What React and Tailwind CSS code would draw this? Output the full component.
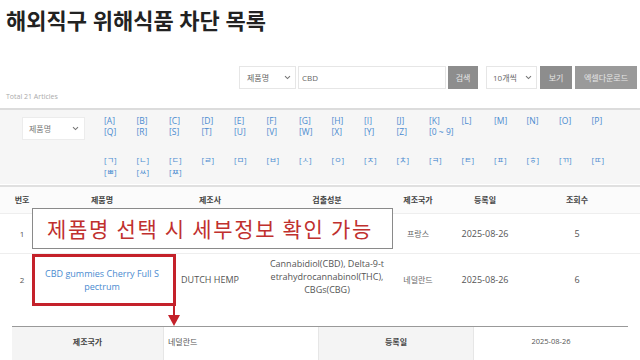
import React from "react";

const row1 = ["A","B","C","D","E","F","G","H","I","J","K","L","M","N","O","P"];
const row2 = ["Q","R","S","T","U","V","W","X","Y","Z","0 ~ 9"];
const han1 = ["ㄱ","ㄴ","ㄷ","ㄹ","ㅁ","ㅂ","ㅅ","ㅇ","ㅈ","ㅊ","ㅋ","ㅌ","ㅍ","ㅎ","ㄲ","ㄸ"];
const han2 = ["ㅃ","ㅆ","ㅉ"];

function Chevron() {
  return (
    <svg width="7" height="5" viewBox="0 0 7 5" className="shrink-0">
      <path d="M1 1.2 L3.5 3.6 L6 1.2" fill="none" stroke="#777" strokeWidth="1.1" />
    </svg>
  );
}

function LetterRow({ items, hangul }) {
  return (
    <div className="grid grid-cols-[repeat(16,32.5px)]">
      {items.map((l) => (
        <span key={l} className={hangul ? "text-[8px] leading-[12px] text-[#4a8bd0] whitespace-nowrap" : "text-[8.5px] leading-[11px] text-[#4a8bd0] whitespace-nowrap"}>
          [{l}]
        </span>
      ))}
    </div>
  );
}

const cols = "grid grid-cols-[44px_116px_100px_134px_48px_86px_98px]";

export default function App() {
  return (
    <div className="relative w-[640px] h-[360px] overflow-hidden bg-white font-['Open_Sans','Noto_Sans_CJK_KR',sans-serif] text-[#333]">
      <h1 className="h-[40px] pl-[6px] text-[22px] leading-[40px] font-bold text-[#222]">
        해외직구 위해식품 차단 목록
      </h1>

      <div className="mt-[26px] flex h-[23px] items-stretch pr-[3px] justify-end text-[8px]">
        <div className="flex w-[57px] items-center justify-between border border-[#e6e6e6] bg-white pl-[7px] pr-[4px] text-[#666]">
          <span>제품명</span>
          <Chevron />
        </div>
        <div className="ml-[2px] flex w-[148px] items-center border border-[#e6e6e6] bg-white pl-[3px] text-[#666]">
          CBD
        </div>
        <div className="ml-[2px] flex w-[30px] items-center justify-center bg-[#8d8d8d] text-[#e6e6e6]">검색</div>
        <div className="ml-[8px] flex w-[51px] items-center justify-between border border-[#e6e6e6] bg-white pl-[6px] pr-[4px] text-[#666]">
          <span>10개씩</span>
          <Chevron />
        </div>
        <div className="ml-[3px] flex w-[32px] items-center justify-center bg-[#8d8d8d] text-[#e6e6e6]">보기</div>
        <div className="ml-[3px] flex w-[62px] items-center justify-center bg-[#9a9a9a] text-[#e6e6e6]">엑셀다운로드</div>
      </div>

      <div className="h-[16px] pl-[6px] pt-[3px] text-[7px] leading-[10px] text-[#aaa]">Total 21 Articles</div>

      <div className="mt-[3px] border-t-2 border-[#dcdcdc] bg-[#f6f6f6] pt-[5px] pb-[6px] flex">
        <div className="ml-[22px] mt-[2px] flex h-[23px] w-[63px] items-center justify-between border border-[#ececec] bg-white pl-[6px] pr-[5px] text-[8px] text-[#777]">
          <span>제품명</span>
          <Chevron />
        </div>
        <div className="ml-[19px] flex flex-col">
          <div>
            <LetterRow items={row1} />
            <LetterRow items={row2} />
          </div>
          <div className="mt-[17px]">
            <LetterRow items={han1} hangul />
            <LetterRow items={han2} hangul />
          </div>
        </div>
      </div>

      <div className="mt-[1px] border-t-2 border-[#e0e0e0]">
        <div className={cols + " h-[27px] items-center bg-[#fbfbfb] border-b border-[#eeeeee] text-[8px] font-bold text-[#444] text-center"}>
          <span>번호</span>
          <span>제품명</span>
          <span>제조사</span>
          <span>검출성분</span>
          <span>제조국가</span>
          <span>등록일</span>
          <span>조회수</span>
        </div>
        <div className={cols + " h-[40px] items-center border-b border-[#eeeeee] text-[9px] text-[#555] text-center"}>
          <span className="text-[8px]">1</span>
          <span></span>
          <span></span>
          <span></span>
          <span className="text-[8px] text-[#666] whitespace-nowrap">프랑스</span>
          <span>2025-08-26</span>
          <span>5</span>
        </div>
        <div className={cols + " h-[51px] items-center text-[9px] leading-[13px] text-[#555] text-center"}>
          <span className="text-[8px]">2</span>
          <span className="text-[#4a8bd0] whitespace-nowrap">CBD gummies Cherry Full S<br />pectrum</span>
          <span className="whitespace-nowrap">DUTCH HEMP</span>
          <span className="whitespace-nowrap -mt-[6px]">Cannabidiol(CBD), Delta-9-t<br />etrahydrocannabinol(THC),<br />CBGs(CBG)</span>
          <span className="text-[8px] text-[#666] whitespace-nowrap">네덜란드</span>
          <span>2025-08-26</span>
          <span>6</span>
        </div>
      </div>

      <div className="mx-[12px] mt-[21px] grid grid-cols-[152px_155px_155px_154px] border-t border-[#999] h-[40px] text-[8px]">
        <div className="bg-[#f4f4f4] pt-[9px] text-center font-bold text-[#444] border-r border-[#e6e6e6]">제조국가</div>
        <div className="pl-[4px] pt-[9px] text-[#555] border-r border-[#e6e6e6]">네덜란드</div>
        <div className="bg-[#f4f4f4] pt-[9px] text-center font-bold text-[#444] border-r border-[#e6e6e6]">등록일</div>
        <div className="pt-[9px] text-center text-[#555] text-[7.5px]">2025-08-26</div>
      </div>

      {/* overlay callout */}
      <div className="absolute left-[32px] top-[208px] flex h-[41px] w-[361px] items-center border border-[#8a8a8a] bg-white pl-[14px] text-[21px] tracking-[0.08em] text-[#c0302e] font-['Noto_Sans_CJK_KR',sans-serif]">
        제품명 선택 시 세부정보 확인 가능
      </div>
      <div className="absolute left-[32px] top-[254px] h-[52px] w-[144px] border-[3px] border-[#c4212a]"></div>
      <div className="absolute left-[173px] top-[305px] h-[12px] w-[2px] bg-[#c4212a]"></div>
      <svg className="absolute left-[168px] top-[315px]" width="12" height="12" viewBox="0 0 12 12">
        <path d="M0 0 L12 0 L6 11 Z" fill="#c4212a" />
      </svg>
    </div>
  );
}
